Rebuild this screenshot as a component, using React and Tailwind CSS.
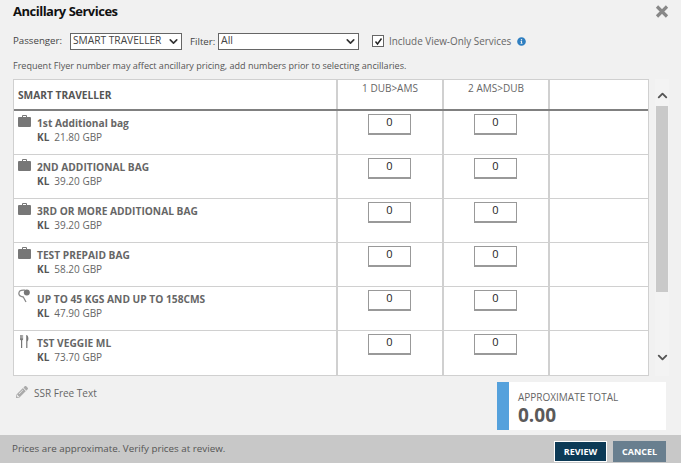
import React from "react";
import { FaPencilAlt, FaInfoCircle } from "react-icons/fa";
import { FiChevronUp, FiChevronDown } from "react-icons/fi";

const font = { fontFamily: '"Open Sans", "Noto Sans", sans-serif' };

const BagIcon = () => (
  <svg width="13" height="12" viewBox="0 0 13 12" fill="#777" className="mt-[1px]">
    <path d="M4 2V1a1 1 0 0 1 1-1h3a1 1 0 0 1 1 1v1h3a1 1 0 0 1 1 1v8a1 1 0 0 1-1 1H1a1 1 0 0 1-1-1V3a1 1 0 0 1 1-1zm1 0h3V1H5z" fillRule="evenodd" />
  </svg>
);

// petit ballon/raquette pour le bagage hors format
const SportIcon = () => (
  <svg width="13" height="14" viewBox="0 0 13 14" fill="none" className="-mt-[1px]">
    <path d="M7 1.2C4 .8 1.2 1.8 .9 4c-.3 2.2 2 3.6 4.4 4l2.7 5" stroke="#888" strokeWidth="1.3" />
    <circle cx="8.8" cy="3.6" r="3" fill="#777" />
  </svg>
);

const MealIcon = () => (
  <svg width="9" height="13" viewBox="0 0 9 13" fill="#777" className="mt-[1px] ml-[2px]">
    <path d="M0 0h.7v3.4h.5V0h.7v3.4h.5V0h.7v4.4L2.2 5.6V13H1V5.6L0 4.4z" />
    <path d="M6.2 0C7.6 0 8.4 1.6 8.4 3.6c0 1.6-.5 2.6-1 3V13H6.2z" />
  </svg>
);

const rows = [
  { icon: <BagIcon />, name: "1st Additional bag", price: "21.80 GBP" },
  { icon: <BagIcon />, name: "2ND ADDITIONAL BAG", price: "39.20 GBP" },
  { icon: <BagIcon />, name: "3RD OR MORE ADDITIONAL BAG", price: "39.20 GBP" },
  { icon: <BagIcon />, name: "TEST PREPAID BAG", price: "58.20 GBP" },
  { icon: <SportIcon />, name: "UP TO 45 KGS AND UP TO 158CMS", price: "47.90 GBP" },
  { icon: <MealIcon />, name: "TST VEGGIE ML", price: "73.70 GBP" },
];

const QtyCell = () => (
  <div className="w-[106px] h-full shrink-0 border-r-2 border-[#d0d0d0] flex justify-center pt-[3px] pr-[1px]">
    <div className="w-[43px] h-[21px] border border-[#999] border-b-2 text-[11px] leading-[14px] text-[#222] text-center bg-white">0</div>
  </div>
);

const App = () => {
  return (
    <div style={font} className="w-[681px] h-[463px] bg-[#f1f1f1] flex flex-col overflow-hidden text-[#555]">
      <div className="h-[22px] mt-[1px] pl-[13px] pr-[12px] flex items-start justify-between">
        <h1 className="text-[13px] leading-[20px] font-bold text-[#111] tracking-[-0.5px]">Ancillary Services</h1>
        <svg width="14" height="13" viewBox="0 0 14 13" className="mt-[4px]">
          <path d="M2 1.5l10 10M12 1.5l-10 10" stroke="#888" strokeWidth="3.2" />
        </svg>
      </div>

      <div className="mt-[9px] h-[18px] pl-[13px] flex items-center text-[9.7px] text-[#444]">
        <span className="w-[57px]">Passenger:</span>
        <div className="w-[112px] h-[17px] border border-[#666] bg-white flex items-center justify-between pl-[2px] pr-[1px] text-[10.2px] text-[#444] whitespace-nowrap">
          <span>SMART TRAVELLER</span>
          <FiChevronDown size={13} strokeWidth={3} className="text-[#333]" />
        </div>
        <span className="ml-[8px] w-[28px] mt-[2px]">Filter:</span>
        <div className="w-[141px] h-[17px] border border-[#666] bg-white flex items-center justify-between pl-[2px] pr-[1px] text-[10.5px] text-[#444]">
          <span>All</span>
          <FiChevronDown size={13} strokeWidth={3} className="text-[#333]" />
        </div>
        <div className="ml-[13px] w-[12px] h-[12px] border border-[#666] bg-white flex items-center justify-center">
          <svg width="9" height="9" viewBox="0 0 9 9" fill="none"><path d="M1.5 4.5l2 2.5 4-5.5" stroke="#222" strokeWidth="1.4" /></svg>
        </div>
        <span className="ml-[5px] text-[9.9px] text-[#666]">Include View-Only Services</span>
        <FaInfoCircle size={9} className="ml-[6px] text-[#2f7fc1]" />
      </div>

      <p className="mt-[8px] pl-[13px] h-[15px] text-[9.05px] leading-[15px] text-[#555]">
        Frequent Flyer number may affect ancillary pricing, add numbers prior to selecting ancillaries.
      </p>

      <div className="mt-[6px] pl-[13px] flex h-[297px]">
        <div className="w-[636px] border border-[#d0d0d0] bg-white overflow-hidden">
          <div className="flex h-[31px] border-b-2 border-[#808080]">
            <div className="w-[324px] shrink-0 border-r-2 border-[#d0d0d0] pl-[4px] pt-[8px] text-[10.2px] font-bold text-[#555] leading-[14px]">SMART TRAVELLER</div>
            <div className="w-[106px] shrink-0 border-r-2 border-[#d0d0d0] text-center text-[10px] leading-[17px] text-[#666]">1 DUB&gt;AMS</div>
            <div className="w-[106px] shrink-0 border-r-2 border-[#d0d0d0] text-center text-[10px] leading-[17px] text-[#666]">2 AMS&gt;DUB</div>
          </div>
          {rows.map((row, i) => (
            <div key={i} className="flex h-[44px] border-b border-[#d0d0d0] last:border-b-0">
              <div className="w-[324px] shrink-0 border-r-2 border-[#d0d0d0] flex pl-[4px] pt-[3px]">
                <div className="w-[19px] shrink-0 flex justify-start">{row.icon}</div>
                <div className="pt-[2px]">
                  <div className="text-[10.2px] leading-[14px] font-bold text-[#666]">{row.name}</div>
                  <div className="text-[10px] leading-[14px] text-[#666]"><b className="font-bold text-[#555] mr-[5px]">KL</b>{row.price}</div>
                </div>
              </div>
              <QtyCell />
              <QtyCell />
            </div>
          ))}
        </div>
        <div className="w-[14px] ml-[6px] flex flex-col items-center bg-[#f3f3f3]">
          <FiChevronUp size={15} strokeWidth={3} className="text-[#555] mt-[9px]" />
          <div className="w-[12px] h-[186px] mt-[3px] bg-[#c9c9c9]" />
          <FiChevronDown size={15} strokeWidth={3} className="text-[#555] mt-[58px]" />
        </div>
      </div>

      <div className="flex-1 flex justify-between pl-[16px] pr-[15px]">
        <div className="flex items-start pt-[10px] text-[10px] text-[#666]">
          <FaPencilAlt size={12} className="text-[#aaa] mr-[6px]" />
          <span className="leading-[14px]">SSR Free Text</span>
        </div>
        <div className="mt-[6px] w-[169px] h-[48px] bg-white flex">
          <div className="w-[12px] bg-[#55a1dc]" />
          <div className="pl-[9px] pt-[8px]">
            <div className="text-[10px] leading-[14px] text-[#666]">APPROXIMATE TOTAL</div>
            <div className="text-[19px] leading-[22px] font-bold text-[#5a5a5a]">0.00</div>
          </div>
        </div>
      </div>

      <div className="h-[28px] bg-[#c8c8c8] flex items-start justify-between pl-[12px] pr-[15px]">
        <span className="text-[9.8px] leading-[28px] text-[#555]">Prices are approximate. Verify prices at review.</span>
        <div className="flex gap-[6px] pt-[6px]">
          <button className="w-[53px] h-[21px] bg-[#0c3a56] border border-white text-white text-[9px] font-bold">REVIEW</button>
          <button className="w-[53px] h-[21px] bg-[#697f8f] text-white text-[9px] font-bold">CANCEL</button>
        </div>
      </div>
    </div>
  );
};

export default App;
